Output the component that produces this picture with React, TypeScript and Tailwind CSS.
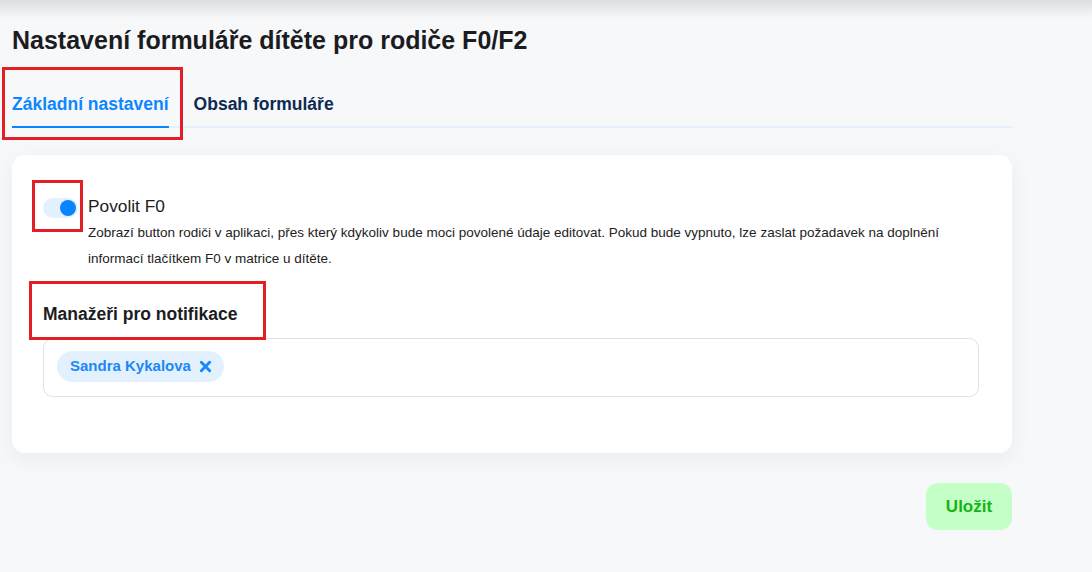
const RedBox = ({ className }: { className: string }) => (
  <div className={`absolute border-[3px] border-[#e31e24] pointer-events-none ${className}`} />
);

const XMark = () => (
  <svg viewBox="0 0 14 14" className="h-[13px] w-[13px]" fill="none">
    <path d="M2.5 2.5 L11.5 11.5 M11.5 2.5 L2.5 11.5" stroke="#1a88f6" strokeWidth={3.2} strokeLinecap="round" />
  </svg>
);

export default function App() {
  return (
    <div className="relative w-[1092px] h-[572px] overflow-hidden bg-[#f7f8fa] font-['Liberation_Sans',Arial,sans-serif]">
      <div className="absolute inset-x-0 top-0 h-[18px] bg-gradient-to-b from-[#dcdddf] to-transparent" />

      <div className="relative w-[1012px] pl-3">
        <h1 className="pt-[26px] text-[25px] leading-[29px] font-bold text-[#1c1c1e]">
          Nastavení formuláře dítěte pro rodiče F0/F2
        </h1>

        <div className="mt-[39px] flex gap-[25px] border-b-2 border-[#e4f0fc]">
          <button className="-mb-[2px] pb-[12px] border-b-2 border-[#0d86ff] text-[17.5px] leading-[20px] font-bold text-[#0d86ff]">
            Základní nastavení
          </button>
          <button className="-mb-[2px] pb-[12px] border-b-2 border-transparent text-[17.5px] leading-[20px] font-bold text-[#0d2a52]">
            Obsah formuláře
          </button>
        </div>

        <div className="mt-[27px] rounded-[13px] bg-white pt-[41px] pb-[56px] pl-[31px] pr-[33px] shadow-[0_6px_24px_rgba(30,40,60,0.06)]">
          <div className="flex gap-[10px]">
            <div className="mt-[2px] flex h-[20px] w-[35px] shrink-0 items-center justify-end rounded-full bg-[#e3f0ff] pr-[2px]">
              <div className="h-[16px] w-[16px] rounded-full bg-[#0a84ff]" />
            </div>
            <div>
              <div className="text-[17.3px] leading-[20px] text-[#1c1c1e]">Povolit F0</div>
              <p className="mt-[4px] text-[13.5px] leading-[26px] text-[#222]">
                Zobrazí button rodiči v aplikaci, přes který kdykoliv bude moci povolené údaje editovat. Pokud bude vypnuto, lze zaslat požadavek na doplnění informací tlačítkem F0 v matrice u dítěte.
              </p>
            </div>
          </div>

          <h2 className="mt-[30px] text-[17.5px] leading-[24px] font-bold text-[#1c1c1e]">
            Manažeři pro notifikace
          </h2>

          <div className="mt-[12px] flex h-[59px] items-start rounded-[10px] border border-[#e1e1e3] py-[12px] pl-[13px]">
            <div className="flex h-[31px] items-center gap-[8px] rounded-full bg-[#e3f1ff] pl-[13px] pr-[12px]">
              <span className="text-[15px] font-bold text-[#1a88f6]">Sandra Kykalova</span>
              <XMark />
            </div>
          </div>
        </div>

        <div className="mt-[30px] flex justify-end">
          <button className="h-[47px] w-[86px] rounded-[12px] bg-[#c4ffc7] text-[17px] font-bold text-[#14b414]">
            Uložit
          </button>
        </div>
      </div>

      <RedBox className="left-[2px] top-[67px] w-[181px] h-[73px]" />
      <RedBox className="left-[32px] top-[180px] w-[51px] h-[52px]" />
      <RedBox className="left-[29px] top-[281px] w-[237px] h-[59px]" />
    </div>
  );
}
